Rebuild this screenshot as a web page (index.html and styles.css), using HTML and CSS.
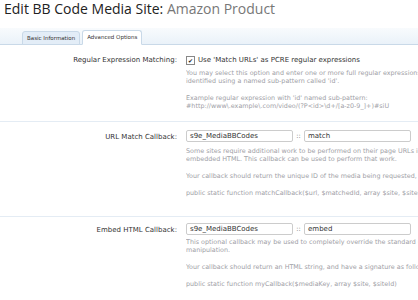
FILE: index.html
```html
<!DOCTYPE html>
<html lang="en">
<head>
  <meta charset="UTF-8">
  <title>Edit BB Code Media Site</title>
  <link rel="stylesheet" href="styles.css">
</head>
<body>
<h1 class="title">Edit BB Code Media Site: <span class="sub">Amazon Product</span></h1>

<div class="tabs">
  <span class="tab">Basic Information</span>
  <span class="tab active">Advanced Options</span>
</div>

<div class="unit first">
  <div class="label">Regular Expression Matching:</div>
  <div class="ctrl">
    <label class="check"><span class="box">&#10004;</span> Use 'Match URLs' as PCRE regular expressions</label>
    <p class="hint">You may select this option and enter one or more full regular expressions instead of URL match patterns. The media ID must be<br>identified using a named sub-pattern called 'id'.</p>
    <p class="hint gap">Example regular expression with 'id' named sub-pattern:<br>#http://www\.example\.com/video/(?P&lt;id&gt;\d+/[a-z0-9_]+)#siU</p>
  </div>
</div>

<div class="unit second">
  <div class="label mid">URL Match Callback:</div>
  <div class="ctrl">
    <div class="pair">
      <span class="input">s9e_MediaBBCodes</span>
      <span class="sep">::</span>
      <span class="input">match</span>
    </div>
    <p class="hint">Some sites require additional work to be performed on their page URLs in order to determine the media ID to use in the<br>embedded HTML. This callback can be used to perform that work.</p>
    <p class="hint gap">Your callback should return the unique ID of the media being requested, and have a signature as follows:</p>
    <p class="hint gap">public static function matchCallback($url, $matchedId, array $site, $siteId)</p>
  </div>
</div>

<div class="unit third">
  <div class="label mid">Embed HTML Callback:</div>
  <div class="ctrl">
    <div class="pair">
      <span class="input">s9e_MediaBBCodes</span>
      <span class="sep">::</span>
      <span class="input">embed</span>
    </div>
    <p class="hint">This optional callback may be used to completely override the standard embed-code generation and perform further<br>manipulation.</p>
    <p class="hint gap">Your callback should return an HTML string, and have a signature as follows:</p>
    <p class="hint gap">public static function myCallback($mediaKey, array $site, $siteId)</p>
  </div>
</div>
</body>
</html>
```

FILE: styles.css
```css
* {
  margin: 0;
  padding: 0;
}

body {
  font-family: "DejaVu Sans", sans-serif;
  color: #333;
  background: #fff;
  overflow: hidden;
}

.title {
  font-family: "Open Sans", sans-serif;
  font-weight: normal;
  font-size: 14px;
  line-height: 18px;
  color: #222;
  padding: 0 4px;
  height: 28px;
}

.title .sub {
  color: #777;
}

.tabs {
  display: flex;
  align-items: flex-end;
  height: 16px;
  padding-left: 22px;
  background: linear-gradient(#f8fbfd, #eaf2f9);
  border-bottom: 1px solid #c9d9e8;
}

.tab {
  font-size: 5.5px;
  line-height: 12px;
  height: 12px;
  padding: 0 4px;
  margin-right: 2px;
  margin-bottom: -1px;
  color: #333;
  background: #e3edf7;
  border: 1px solid #c9d9e8;
  border-radius: 3px 3px 0 0;
}

.tab.active {
  background: #fff;
  border-bottom-color: #fff;
  height: 13px;
}

.unit {
  display: flex;
  border-bottom: 1px solid #e4ecf4;
}

.unit.first {
  padding: 9px 0 11px;
}

.unit.second {
  padding: 8px 0 19px;
}

.unit.third {
  padding: 6px 0 17px;
  border-bottom: 0;
}

.label {
  width: 177px;
  text-align: right;
  font-size: 7px;
  line-height: 12px;
  padding-right: 9px;
  color: #333;
  flex-shrink: 0;
}

.label.mid {
  padding-top: 1px;
}

.ctrl {
  flex: 1;
  min-width: 0;
  overflow: hidden;
  white-space: nowrap;
}

.check {
  display: flex;
  align-items: center;
  font-size: 7px;
  line-height: 12px;
  color: #333;
}

.box {
  display: inline-block;
  width: 7px;
  height: 7px;
  border: 1px solid #888;
  font-size: 6px;
  line-height: 7px;
  text-align: center;
  margin-right: 3px;
  color: #222;
}

.hint {
  font-size: 6.4px;
  line-height: 8px;
  color: #a0a0a6;
  margin-top: 3px;
}

.second .pair + .hint {
  margin-top: 5px;
}

.hint.gap {
  margin-top: 9px;
}

.pair {
  display: flex;
  align-items: center;
}

.input {
  display: block;
  width: 102px;
  height: 10px;
  border: 1px solid #ccc;
  border-radius: 2px;
  font-size: 7px;
  line-height: 10px;
  padding-left: 3px;
  color: #333;
}

.sep {
  width: 11px;
  text-align: center;
  font-size: 6.5px;
  color: #666;
}
```
